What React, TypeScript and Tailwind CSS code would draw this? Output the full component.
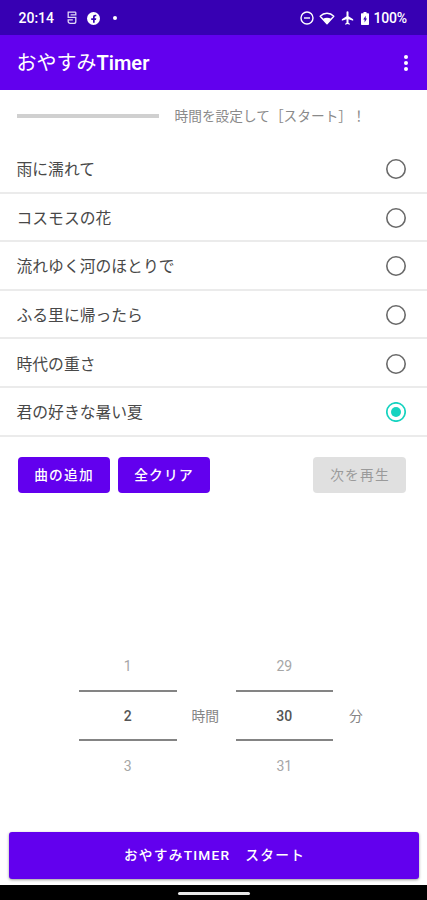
import { useState } from "react";

const songs = [
  "雨に濡れて",
  "コスモスの花",
  "流れゆく河のほとりで",
  "ふる里に帰ったら",
  "時代の重さ",
  "君の好きな暑い夏",
];

function StatusBar() {
  return (
    <div className="h-[34.5px] shrink-0 bg-[#3700b3] text-white flex items-center justify-between pl-[18.5px] pr-[19.5px] pt-[2px]">
      <div className="flex items-center">
        <span className="w-[36px] text-[14px] leading-4 font-medium whitespace-nowrap">20:14</span>
        <svg className="ml-[12.5px]" width="10" height="14" viewBox="0 0 10 14" fill="none" stroke="#e0d8f6" strokeWidth="1.3">
          <path d="M8.8 1.200H1.200v5.200h7.600v4a2 2 0 0 1-2 2H3.200a2 2 0 0 1-2-2V8.800h4.600M3.600 3.800h5.200V1.200" />
        </svg>
        <svg className="ml-[9.5px]" width="13" height="13" viewBox="0 0 13 13">
          <circle cx="6.5" cy="6.5" r="6.5" fill="#fff" />
          <path d="M6 10.800V8H4.200V6.200H6V5c0-1.500.8-2.300 2.200-2.300h1.100v1.600H8.500c-.6 0-.8.3-.8.900v1h1.600L9 8H7.700v2.800z" fill="#3700b3" />
        </svg>
        <span className="ml-[13px] size-[4px] rounded-full bg-white" />
      </div>
      <div className="flex items-center">
        <svg className="-ml-px" width="14" height="14" viewBox="0 0 14 14" fill="none" stroke="currentColor" strokeWidth="1.4">
          <circle cx="7" cy="7" r="6" />
          <path d="M4 7h6" />
        </svg>
        <svg className="ml-[5px]" width="16" height="13" viewBox="0 0 16 13">
          <path d="M1.2 4.2C5 .3 11 .3 14.8 4.200L8 11.800z" fill="none" stroke="#fff" strokeWidth="1.4" strokeLinejoin="round" />
          <path d="M3.8 7c2.500-1.600 5.900-1.600 8.400 0L8 12z" fill="#fff" />
        </svg>
        <svg className="ml-[6px]" width="13" height="14" viewBox="2 1.5 19 21" fill="currentColor">
          <path d="M20 16v-2l-7-4.500V3.500a1.500 1.500 0 0 0-3 0v6L3 14v2l7-2v5l-2 1.500V22l3.500-1 3.500 1v-1.500L13 19v-5z" />
        </svg>
        <svg className="ml-[7px]" width="8" height="13" viewBox="0 0 8 13">
          <path d="M2.500 0h3v1.300H7c.6 0 1 .4 1 1V12c0 .6-.4 1-1 1H1c-.6 0-1-.4-1-1V2.300c0-.6.4-1 1-1h1.500z" fill="#fff" />
          <path d="M4.700 3.800 2.200 7.600h1.400v2.900l2.400-3.900H4.700z" fill="#3700b3" />
        </svg>
        <span className="ml-[5px] w-[34px] text-[14px] leading-4 font-medium tracking-[-0.2px] whitespace-nowrap">100%</span>
      </div>
    </div>
  );
}

function NumberPicker({ values }: { values: number[] }) {
  return (
    <div className="w-[97.5px] text-center text-[14px] text-[#a6a6a6]">
      <div className="h-[49px] leading-[51px]">{values[0]}</div>
      <div className="h-[51.5px] border-y-2 border-[#848484] leading-[48px] text-[#555] font-medium">{values[1]}</div>
      <div className="h-[49px] leading-[51px]">{values[2]}</div>
    </div>
  );
}

export default function App() {
  const [selected, setSelected] = useState(5);

  return (
    <div className="w-full h-screen flex flex-col bg-white overflow-hidden font-[Roboto,'Noto_Sans_CJK_JP',sans-serif]">
      <StatusBar />

      {/* App bar */}
      <header className="h-[55.5px] shrink-0 bg-[#6200ee] text-white flex items-center justify-between pl-[16.5px] pr-[19.5px] pt-[2px]">
        <h1 className="text-[20px] leading-6">
          おやすみ<span className="font-semibold">Timer</span>
        </h1>
        <button aria-label="menu" className="flex flex-col gap-[2px]">
          <span className="size-[4px] rounded-full bg-white" />
          <span className="size-[4px] rounded-full bg-white" />
          <span className="size-[4px] rounded-full bg-white" />
        </button>
      </header>

      {/* Progress and hint */}
      <div className="h-[55px] shrink-0 flex items-center pl-[16.5px] pb-[3px]">
        <div className="w-[142px] h-[3.5px] bg-[#d0d0d0]" />
        <p className="ml-[16px] text-[13.7px] leading-5 text-[#8a8a8a] whitespace-nowrap">時間を設定して［スタート］！</p>
      </div>

      {/* Song list */}
      <ul className="shrink-0">
        {songs.map((song, i) => (
          <li
            key={song}
            onClick={() => setSelected(i)}
            className="h-[48.6px] flex items-center justify-between pl-[16.5px] pr-[21px] pt-[2px] border-b-2 border-[#ebebeb]"
          >
            <span className="pt-[2px] text-[15.8px] leading-6 text-[#484848]">{song}</span>
            {i === selected ? (
              <svg width="20" height="20" viewBox="0 0 20 20">
                <circle cx="10" cy="10" r="9.2" fill="none" stroke="#16d3c0" strokeWidth="1.7" />
                <circle cx="10" cy="10" r="5" fill="#16d3c0" />
              </svg>
            ) : (
              <svg width="20" height="20" viewBox="0 0 20 20">
                <circle cx="10" cy="10" r="9.2" fill="none" stroke="#696969" strokeWidth="1.6" />
              </svg>
            )}
          </li>
        ))}
      </ul>

      <div className="mt-[20.5px] shrink-0 flex pl-[17.5px] pr-[21px] text-[13.7px] tracking-[1.2px] font-medium">
        <button className="w-[92px] h-[35.5px] rounded-[4px] bg-[#6200ee] pl-px text-white">曲の追加</button>
        <button className="ml-[8.5px] w-[92px] h-[35.5px] rounded-[4px] bg-[#6200ee] text-white">全クリア</button>
        <button className="ml-auto w-[93px] h-[35.5px] rounded-[4px] bg-[#e0e0e0] pl-px text-[#9a9a9a] font-normal">次を再生</button>
      </div>

      {/* Time pickers */}
      <div className="mt-auto mb-[42px] shrink-0 flex items-center pl-[79px]">
        <NumberPicker values={[1, 2, 3]} />
        <span className="ml-[15px] w-[28px] pt-[2px] text-[13.8px] text-[#858585]">時間</span>
        <div className="ml-[16px]">
          <NumberPicker values={[29, 30, 31]} />
        </div>
        <span className="ml-[16px] pt-[2px] text-[13.8px] text-[#858585]">分</span>
      </div>

      <div className="shrink-0 px-[8.5px] pb-[6px]">
        <button className="w-full h-[46.5px] rounded-[3px] bg-[#6200ee] pl-[2px] text-white text-[13.7px] font-medium tracking-[1.25px] shadow-[0_1px_3px_rgba(0,0,0,0.4)]">
          おやすみTIMER　スタート
        </button>
      </div>

      <div className="h-[15.5px] shrink-0 bg-black flex justify-center pt-[7px]">
        <div className="w-[72px] h-[3.5px] rounded-full bg-[#e8e8e8]" />
      </div>
    </div>
  );
}
